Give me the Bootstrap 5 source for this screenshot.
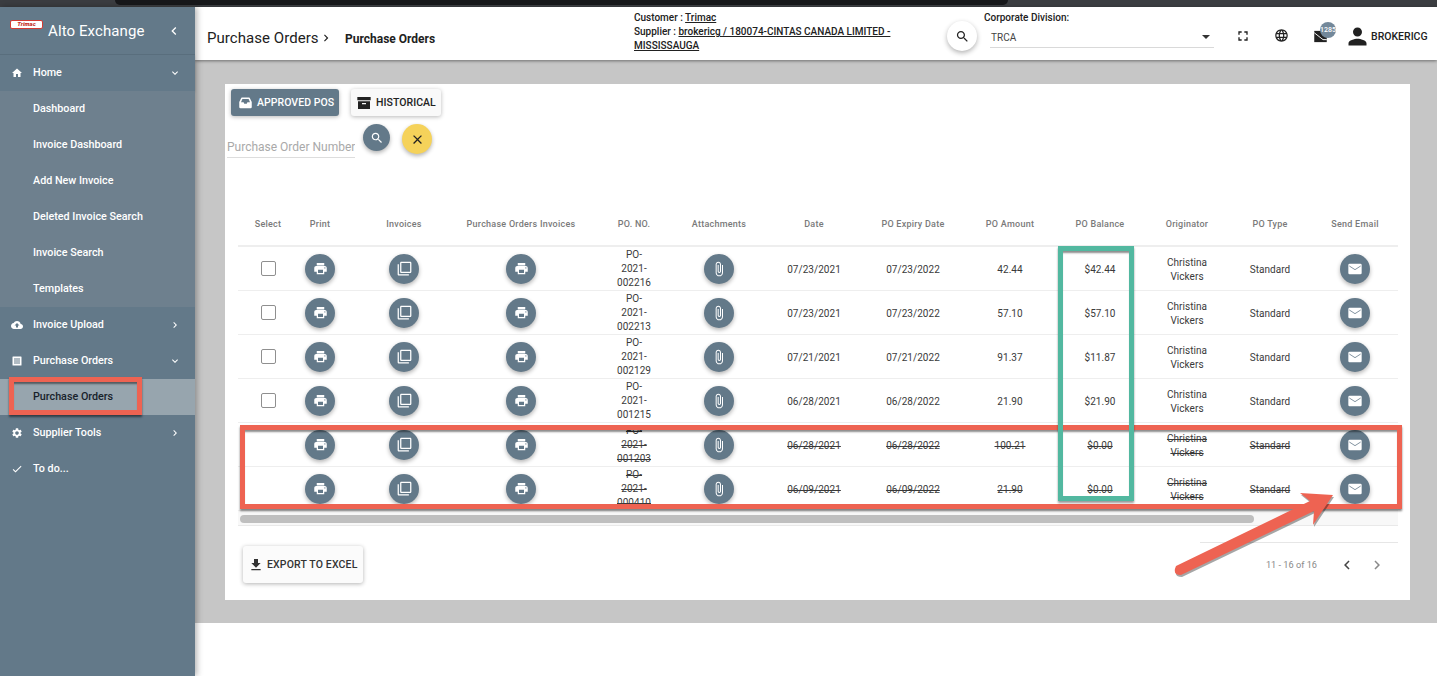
<!doctype html>
<html lang="en">
<head>
<meta charset="utf-8">
<title>Purchase Orders</title>
<link href="https://cdn.jsdelivr.net/npm/bootstrap@5.3.0/dist/css/bootstrap.min.css" rel="stylesheet">
<style>
html,body{height:676px;overflow:hidden}
body{font-family:Roboto,"Liberation Sans",sans-serif;background:#fff;color:#212121;position:relative}
svg.ico{fill:currentColor;flex:none;display:block}
.topstrip{height:7px;background:#3b3d41}
.topstrip-in{height:5px;width:893px;margin-left:115px;background:#17181b;border-radius:0 0 6px 6px}
.shell{height:669px}
.side{width:195px;background:#637989;color:#fff;box-shadow:2px 0 6px rgba(0,0,0,.3);z-index:3;font-size:10.75px;font-weight:500}
.brand{height:48px;padding:0 13px 0 10px;border-bottom:1px solid #5a6f7e}
.logo{width:33px;height:9px;margin-top:-12px;background:#fff;border:1.5px solid #d33b34;border-radius:2px;color:#c5332b;font-size:6px;line-height:6px;font-weight:900;font-style:italic;text-align:center;overflow:hidden}
.brand-name{font-size:15px;font-weight:400;margin:2px 0 0 5px;letter-spacing:.1px;flex:1}
.mitem{height:36px;padding:0 14px 0 11px}
.mitem .lbl{flex:1;margin-left:10px}
.m-home{box-shadow:0 1px 2px rgba(0,0,0,.15)}
.sub{background:#6e808e}
.sitem{height:36px;padding-left:33px}
.sitem-on{background:#97a5ae;color:#17222b}
.main{min-width:0}
.head{height:53px;background:#fff;box-shadow:0 1px 3px rgba(0,0,0,.45);z-index:2;padding:4px 8px 0 12px}
.crumb1{font-size:15px;width:138px;margin-top:5px;letter-spacing:.05px}
.crumb2{font-size:12px;font-weight:700;width:289px;margin-top:7px}
.cust{width:313px;font-size:10px;font-weight:500;line-height:14px;align-self:flex-start}
.cust a{color:#212121}
.hsearch{width:30px;height:30px;border-radius:50%;background:#fff;box-shadow:0 2px 5px rgba(0,0,0,.3);color:#222;margin-top:1px}
.divbox{width:230px;margin:1px 0 0 7px;align-self:flex-start}
.divlbl{font-size:10px;font-weight:500;line-height:12px}
.divsel{height:20px;margin:4px 0 0 6px;border-bottom:1px solid #d9d9d9;font-size:10px;color:#444;padding:0 4px 0 1px}
.caret-d{width:0;height:0;border-left:4px solid transparent;border-right:4px solid transparent;border-top:4px solid #333;margin-top:-2px}
.hicons{width:215px;font-size:10.5px;font-weight:500}
.bell{position:relative;margin-left:24px;margin-top:1px}
.bub{position:absolute;left:7px;top:-7px;width:16px;height:16px;border-radius:50%;background:#73889a;color:#fff;font-size:7px;line-height:16px;text-align:center}
.hi-full{margin-left:21px}
.hi-globe{margin-left:23px}
.hi-user{margin:2px 0 0 16px}
.hi-name{margin-top:2px}
.stage{height:563px;background:#c6c6c6;padding:24px 27px 23px 30px}
.panel{height:516px;background:#fff;padding:0 12px 0 13px;position:relative}
.tbtn{height:27px;border-radius:3px;font-size:10.5px;font-weight:500;box-shadow:0 1px 4px rgba(0,0,0,.28);letter-spacing:.05px}
.tbtn-a{background:#637989;color:#fff;width:108px;padding-left:7px}
.tbtn-b{background:#f9f9f9;color:#222;width:90px;margin-left:12px;padding-left:5px}
.toolrow{padding-top:5px;margin-left:-7px}
.srow{margin-left:-11px;margin-top:8px}
.sinput{width:128px;height:25px;margin-top:9px;border:0;border-bottom:1px solid #ddd;font-size:12px;padding:4px 0 0;color:#333;background:transparent;outline:none}
.sinput::placeholder{color:#a9a9a9;opacity:1}
.rbtn{width:27px;height:27px;border-radius:50%;box-shadow:0 2px 4px rgba(0,0,0,.3)}
.rbtn-s{background:#637989;color:#fff;margin-left:8px}
.rbtn-x{background:#f5d25a;color:#222;width:30px;height:30px;margin-left:12px}
.twrap{height:308px;overflow:hidden;margin-top:45px;position:relative}
.po{table-layout:fixed;width:1160px;border-collapse:collapse;font-size:10px;color:#3a3a3a;letter-spacing:.05px}
.po th{height:43px;text-align:center;font-size:9px;font-weight:500;color:#7a7a7a;letter-spacing:.25px;vertical-align:middle;border-bottom:2px solid #eee;padding:2px 0 0}
.po td{height:44px;text-align:center;vertical-align:middle;border-bottom:1px solid #eee;padding:2px 4px 0;line-height:14px;overflow:hidden}
.po td.pono{padding:1px 18px 0}
.po .shift{padding-left:22px;padding-right:0}
.po tr.gone td{text-decoration:line-through}
.cbx{width:15px;height:15px;border:1.5px solid #8f8f8f;border-radius:2px;margin:-3px auto 0}
.fab{width:30px;height:30px;border-radius:50%;background:#637989;color:#fff;margin:-2px auto 0;box-shadow:0 2px 4px rgba(0,0,0,.3)}
.sbar{height:15px;background:#f8f8f8;border-bottom:1px solid #e9e9e9;padding:4px 144px 3px 2px}
.thumb{height:8px;background:#bfbfbf;border-radius:4px}
.foot{margin-top:16px}
.export{width:120px;height:37px;margin:4px 0 0 5px;background:#fbfbfb;border-radius:3px;box-shadow:0 1px 4px rgba(0,0,0,.3);font-size:10.5px;font-weight:500;color:#333;padding:1px 0 0 5px;gap:3px;letter-spacing:.15px}
.pager{width:198px;height:44px;border-top:1px solid #e6e6e6;font-size:9.2px;color:#8a8a8a;padding-right:12px}
.pgtxt{margin-right:21px}
.pgprev{color:#444;margin-right:12px}
.bottom{height:53px;background:#fff}
.ann{position:absolute;z-index:5;pointer-events:none}
.ann-red{border:5px solid #ee6352;box-shadow:inset 0 3px 2px -1px rgba(0,0,0,.45),0 2px 2px rgba(0,0,0,.5)}
.ann-green{border:5px solid #52b8a0;box-shadow:inset 0 3px 2px -1px rgba(0,0,0,.45),0 2px 2px rgba(0,0,0,.4)}
.a1{left:240px;top:425px;width:1162px;height:84px}
.a2{left:1058px;top:246px;width:76px;height:255px}
.a3{left:9px;top:377px;width:133px;height:38px}
.a4{left:1170px;top:490px;width:170px;height:90px}
</style>
</head>
<body>
<svg width="0" height="0" class="position-absolute">
<symbol id="i-home" viewBox="0 0 24 24"><path d="M10 20v-6h4v6h5v-8h3L12 3 2 12h3v8z"/></symbol>
<symbol id="i-down" viewBox="0 0 24 24"><path d="M16.59 8.59L12 13.17 7.41 8.59 6 10l6 6 6-6z"/></symbol>
<symbol id="i-right" viewBox="0 0 24 24"><path d="M10 6L8.59 7.41 13.17 12l-4.58 4.59L10 18l6-6z"/></symbol>
<symbol id="i-left" viewBox="0 0 24 24"><path d="M15.41 7.41L14 6l-6 6 6 6 1.41-1.41L10.83 12z"/></symbol>
<symbol id="i-cloud" viewBox="0 0 24 24"><path d="M19.35 10.04C18.67 6.59 15.64 4 12 4 9.11 4 6.6 5.64 5.35 8.04 2.34 8.36 0 10.91 0 14c0 3.31 2.69 6 6 6h13c2.76 0 5-2.24 5-5 0-2.64-2.05-4.78-4.65-4.96zM14 13v4h-4v-4H7l5-5 5 5h-3z"/></symbol>
<symbol id="i-list" viewBox="0 0 24 24"><path fill-rule="evenodd" d="M4 3h16a1 1 0 011 1v16a1 1 0 01-1 1H4a1 1 0 01-1-1V4a1 1 0 011-1zm2 4v2h12V7zm0 4v2h12v-2zm0 4v2h12v-2z"/></symbol>
<symbol id="i-gear" viewBox="0 0 24 24"><path d="M19.14 12.94c.04-.3.06-.61.06-.94 0-.32-.02-.64-.07-.94l2.03-1.58c.18-.14.23-.41.12-.61l-1.92-3.32c-.12-.22-.37-.29-.59-.22l-2.39.96c-.5-.38-1.03-.7-1.62-.94l-.36-2.54c-.04-.24-.24-.41-.48-.41h-3.84c-.24 0-.43.17-.47.41l-.36 2.54c-.59.24-1.13.57-1.62.94l-2.39-.96c-.22-.08-.47 0-.59.22L2.74 8.87c-.12.21-.08.47.12.61l2.03 1.58c-.05.3-.09.63-.09.94s.02.64.07.94l-2.03 1.58c-.18.14-.23.41-.12.61l1.92 3.32c.12.22.37.29.59.22l2.39-.96c.5.38 1.03.7 1.62.94l.36 2.54c.05.24.24.41.48.41h3.84c.24 0 .44-.17.47-.41l.36-2.54c.59-.24 1.13-.56 1.62-.94l2.39.96c.22.08.47 0 .59-.22l1.92-3.32c.12-.22.07-.47-.12-.61l-2.01-1.58zM12 15.6c-1.98 0-3.6-1.62-3.6-3.6s1.62-3.6 3.6-3.6 3.6 1.62 3.6 3.6-1.62 3.6-3.6 3.6z"/></symbol>
<symbol id="i-check" viewBox="0 0 24 24"><path d="M9 16.17L4.83 12l-1.42 1.41L9 19 21 7l-1.41-1.41z"/></symbol>
<symbol id="i-inbox" viewBox="0 0 24 24"><path fill-rule="evenodd" d="M6 4h12a1 1 0 01.9.6L22 11v8a2 2 0 01-2 2H4a2 2 0 01-2-2v-8l3.1-6.4A1 1 0 016 4zm1 2.5L4.8 11.5H9l1 2.5h4l1-2.5h4.2L17 6.5z"/></symbol>
<symbol id="i-archive" viewBox="0 0 24 24"><path fill-rule="evenodd" d="M2 3h20v5H2zM3 9.500h18V21H3zm6 2.500v1.800h6V12z"/></symbol>
<symbol id="i-search" viewBox="0 0 24 24"><path d="M15.5 14h-.79l-.28-.27C15.41 12.59 16 11.11 16 9.5 16 5.91 13.09 3 9.5 3S3 5.91 3 9.5 5.91 16 9.5 16c1.61 0 3.09-.59 4.23-1.57l.27.28v.79l5 4.99L20.49 19l-4.99-5zm-6 0C7.01 14 5 11.99 5 9.5S7.01 5 9.5 5 14 7.01 14 9.5 11.99 14 9.5 14z"/></symbol>
<symbol id="i-close" viewBox="0 0 24 24"><path d="M19 6.41L17.59 5 12 10.59 6.41 5 5 6.41 10.59 12 5 17.59 6.41 19 12 13.41 17.59 19 19 17.59 13.41 12z"/></symbol>
<symbol id="i-print" viewBox="0 0 24 24"><path d="M19 8H5c-1.66 0-3 1.34-3 3v6h4v4h12v-4h4v-6c0-1.66-1.34-3-3-3zm-3 11H8v-5h8v5zm3-7c-.55 0-1-.45-1-1s.45-1 1-1 1 .45 1 1-.45 1-1 1zm-1-9H6v4h12V3z"/></symbol>
<symbol id="i-copy" viewBox="0 0 24 24"><path d="M3 5H1v16c0 1.1.9 2 2 2h16v-2H3V5zm18-4H7c-1.1 0-2 .9-2 2v14c0 1.1.9 2 2 2h14c1.1 0 2-.9 2-2V3c0-1.1-.9-2-2-2zm0 16H7V3h14v14z"/></symbol>
<symbol id="i-clip" viewBox="0 0 24 24"><path d="M16.5 6v11.500c0 2.210-1.790 4-4 4s-4-1.790-4-4V5c0-1.380 1.120-2.500 2.500-2.500s2.500 1.120 2.500 2.500v10.500c0 .55-.45 1-1 1s-1-.45-1-1V6H10v9.500c0 1.380 1.120 2.500 2.500 2.500s2.500-1.120 2.500-2.500V5c0-2.210-1.790-4-4-4S7 2.790 7 5v12.500c0 3.040 2.460 5.500 5.500 5.500s5.500-2.460 5.500-5.500V6h-1.500z"/></symbol>
<symbol id="i-mail" viewBox="0 0 24 24"><path d="M4 4h16a2 2 0 012 2v12a2 2 0 01-2 2H4a2 2 0 01-2-2V6a2 2 0 012-2z"/><path d="M3.500 7.500l8.500 5.500 8.500-5.500" fill="none" stroke="#637989" stroke-width="1.200"/></symbol>
<symbol id="i-mail2" viewBox="0 0 24 24"><path d="M2 3h20v18H2z"/><path d="M2 6l14 11 6 0" fill="none" stroke="#fff" stroke-width="1.500"/></symbol>
<symbol id="i-full" viewBox="0 0 24 24"><path d="M7 14H5v5h5v-2H7v-3zm-2-4h2V7h3V5H5v5zm12 7h-3v2h5v-5h-2v3zM14 5v2h3v3h2V5h-5z"/></symbol>
<symbol id="i-globe" viewBox="0 0 24 24"><path d="M11.990 2C6.470 2 2 6.480 2 12s4.470 10 9.990 10C17.520 22 22 17.520 22 12S17.520 2 11.990 2zm6.930 6h-2.950c-.32-1.250-.78-2.450-1.380-3.560 1.840.63 3.370 1.910 4.330 3.560zM12 4.040c.83 1.200 1.480 2.530 1.910 3.960h-3.820c.43-1.430 1.080-2.760 1.910-3.960zM4.260 14C4.100 13.360 4 12.690 4 12s.1-1.360.26-2h3.380c-.08.66-.14 1.320-.14 2 0 .68.06 1.340.14 2H4.260zm.82 2h2.950c.32 1.250.78 2.450 1.380 3.560-1.840-.63-3.370-1.900-4.330-3.560zm2.950-8H5.080c.96-1.660 2.490-2.930 4.330-3.560C8.810 5.550 8.350 6.750 8.030 8zM12 19.960c-.83-1.200-1.480-2.530-1.910-3.960h3.820c-.43 1.430-1.080 2.760-1.910 3.960zM14.340 14H9.660c-.09-.66-.16-1.320-.16-2 0-.68.07-1.350.16-2h4.680c.09.65.16 1.320.16 2 0 .68-.07 1.340-.16 2zm.25 5.560c.6-1.110 1.060-2.310 1.380-3.560h2.950c-.96 1.650-2.490 2.930-4.330 3.560zM16.360 14c.08-.66.14-1.320.14-2 0-.68-.06-1.340-.14-2h3.380c.16.64.26 1.310.26 2s-.1 1.360-.26 2h-3.380z"/></symbol>
<symbol id="i-person" viewBox="0 0 24 24"><path d="M12 12c2.210 0 4-1.790 4-4s-1.790-4-4-4-4 1.790-4 4 1.790 4 4 4zm0 2c-2.670 0-8 1.340-8 4v2h16v-2c0-2.660-5.330-4-8-4z"/></symbol>
<symbol id="i-dl" viewBox="0 0 24 24"><path d="M19 9h-4V3H9v6H5l7 7 7-7zM5 18v2h14v-2H5z"/></symbol>
</svg>

<div class="topstrip"><div class="topstrip-in"></div></div>
<div class="shell d-flex">
  <aside class="side flex-shrink-0">
    <div class="brand d-flex align-items-center">
      <div class="logo">Trimac</div>
      <div class="brand-name">Alto Exchange</div>
      <svg class="ico" width="16" height="16"><use href="#i-left"/></svg>
    </div>
    <div class="mitem m-home d-flex align-items-center"><svg class="ico" width="12" height="12"><use href="#i-home"/></svg><span class="lbl">Home</span><svg class="ico" width="12" height="12"><use href="#i-down"/></svg></div>
    <div class="sub">
      <div class="sitem d-flex align-items-center">Dashboard</div>
      <div class="sitem d-flex align-items-center">Invoice Dashboard</div>
      <div class="sitem d-flex align-items-center">Add New Invoice</div>
      <div class="sitem d-flex align-items-center">Deleted Invoice Search</div>
      <div class="sitem d-flex align-items-center">Invoice Search</div>
      <div class="sitem d-flex align-items-center">Templates</div>
    </div>
    <div class="mitem d-flex align-items-center"><svg class="ico" width="12" height="12"><use href="#i-cloud"/></svg><span class="lbl">Invoice Upload</span><svg class="ico" width="12" height="12"><use href="#i-right"/></svg></div>
    <div class="mitem d-flex align-items-center"><svg class="ico" width="12" height="12"><use href="#i-list"/></svg><span class="lbl">Purchase Orders</span><svg class="ico" width="12" height="12"><use href="#i-down"/></svg></div>
    <div class="sitem sitem-on d-flex align-items-center">Purchase Orders</div>
    <div class="mitem d-flex align-items-center"><svg class="ico" width="12" height="12"><use href="#i-gear"/></svg><span class="lbl">Supplier Tools</span><svg class="ico" width="12" height="12"><use href="#i-right"/></svg></div>
    <div class="mitem d-flex align-items-center"><svg class="ico" width="12" height="12"><use href="#i-check"/></svg><span class="lbl">To do...</span></div>
  </aside>

  <div class="main flex-grow-1 d-flex flex-column">
    <header class="head d-flex align-items-center flex-shrink-0">
      <div class="crumb1 d-flex align-items-center">Purchase Orders<svg class="ico" width="14" height="14"><use href="#i-right"/></svg></div>
      <div class="crumb2">Purchase Orders</div>
      <div class="cust">Customer : <a href="#">Trimac</a><br>Supplier : <a href="#">brokericg / 180074-CINTAS CANADA LIMITED -</a><br><a href="#">MISSISSAUGA</a></div>
      <div class="hsearch d-flex align-items-center justify-content-center"><svg class="ico" width="15" height="15"><use href="#i-search"/></svg></div>
      <div class="divbox">
        <div class="divlbl">Corporate Division:</div>
        <div class="divsel d-flex align-items-center justify-content-between"><span>TRCA</span><span class="caret-d"></span></div>
      </div>
      <div class="hicons d-flex align-items-center">
        <svg class="ico hi-full" width="16" height="16"><use href="#i-full"/></svg>
        <svg class="ico hi-globe" width="15" height="15"><use href="#i-globe"/></svg>
        <span class="bell"><svg class="ico" width="15" height="15"><use href="#i-mail2"/></svg><span class="bub">1285</span></span>
        <svg class="ico hi-user" width="27" height="27"><use href="#i-person"/></svg>
        <span class="hi-name">BROKERICG</span>
      </div>
    </header>
    <section class="stage flex-shrink-0">
      <div class="panel">
        <div class="toolrow d-flex">
          <div class="tbtn tbtn-a d-flex align-items-center gap-1 text-nowrap"><svg class="ico" width="15" height="15"><use href="#i-inbox"/></svg>APPROVED POS</div>
          <div class="tbtn tbtn-b d-flex align-items-center gap-1 text-nowrap"><svg class="ico" width="16" height="16"><use href="#i-archive"/></svg>HISTORICAL</div>
        </div>
        <div class="srow d-flex align-items-start">
          <input class="sinput" type="text" placeholder="Purchase Order Number">
          <div class="rbtn rbtn-s d-flex align-items-center justify-content-center"><svg class="ico" width="14" height="14"><use href="#i-search"/></svg></div>
          <div class="rbtn rbtn-x d-flex align-items-center justify-content-center"><svg class="ico" width="15" height="15"><use href="#i-close"/></svg></div>
        </div>
        <div class="twrap" id="tw"></div>
        <div class="sbar"><div class="thumb"></div></div>
        <div class="foot d-flex justify-content-between">
          <div class="export d-flex align-items-center text-nowrap"><svg class="ico" width="16" height="16"><use href="#i-dl"/></svg>EXPORT TO EXCEL</div>
          <div class="pager d-flex align-items-center justify-content-end">
            <span class="pgtxt">11 - 16 of 16</span>
            <svg class="ico pgprev" width="18" height="18"><use href="#i-left"/></svg>
            <svg class="ico" width="18" height="18"><use href="#i-right"/></svg>
          </div>
        </div>
      </div>
    </section>
    <div class="bottom"></div>
  </div>
</div>

<div class="ann ann-red a1"></div>
<div class="ann ann-green a2"></div>
<div class="ann ann-red a3"></div>
<svg class="ann a4" viewBox="0 0 170 90"><path d="M6 76L140 11 130 3 163 5 143 35 144 21 11 85Q2 85 6 76Z" fill="rgba(0,0,0,.35)" transform="translate(1,2)"/><path d="M6 76L140 11 130 3 163 5 143 35 144 21 11 85Q2 85 6 76Z" fill="#ee6352"/></svg>

<script src="https://cdn.jsdelivr.net/npm/bootstrap@5.3.0/dist/js/bootstrap.bundle.min.js"></script>
<script>
var rows=[
["PO-2021-002216","07/23/2021","07/23/2022","42.44","$42.44",0,1],
["PO-2021-002213","07/23/2021","07/23/2022","57.10","$57.10",0,1],
["PO-2021-002129","07/21/2021","07/21/2022","91.37","$11.87",0,1],
["PO-2021-001215","06/28/2021","06/28/2022","21.90","$21.90",0,1],
["PO-2021-001203","06/28/2021","06/28/2022","100.21","$0.00",1,0],
["PO-2021-000410","06/09/2021","06/09/2022","21.90","$0.00",1,0]];
function fab(i,s){return '<div class="fab d-flex align-items-center justify-content-center"><svg class="ico" width="'+s+'" height="'+s+'"><use href="#i-'+i+'"/></svg></div>'}
var w=[60,44,102,154,72,98,92,106,88,92,82,84,86];
var h=["Select","Print","Invoices","Purchase Orders Invoices","PO. NO.","Attachments","Date","PO Expiry Date","PO Amount","PO Balance","Originator","PO Type","Send Email"];
var t='<table class="po"><colgroup>'+w.map(function(x){return '<col style="width:'+x+'px">'}).join('')+'</colgroup><thead><tr>';
h.forEach(function(x,i){t+='<th'+(i==2?' class="shift"':'')+'>'+x+'</th>'});
t+='</tr></thead><tbody>';
rows.forEach(function(r){
 t+='<tr class="'+(r[5]?'gone':'')+'"><td>'+(r[6]?'<div class="cbx"></div>':'')+'</td><td>'+fab('print',15)+'</td><td class="shift">'+fab('copy',15)+'</td><td>'+fab('print',15)+'</td><td class="pono">'+r[0]+'</td><td>'+fab('clip',16)+'</td><td>'+r[1]+'</td><td>'+r[2]+'</td><td>'+r[3]+'</td><td>'+r[4]+'</td><td>Christina Vickers</td><td>Standard</td><td>'+fab('mail',16)+'</td></tr>';
});
document.getElementById('tw').innerHTML=t+'</tbody></table>';
</script>
</body>
</html>
